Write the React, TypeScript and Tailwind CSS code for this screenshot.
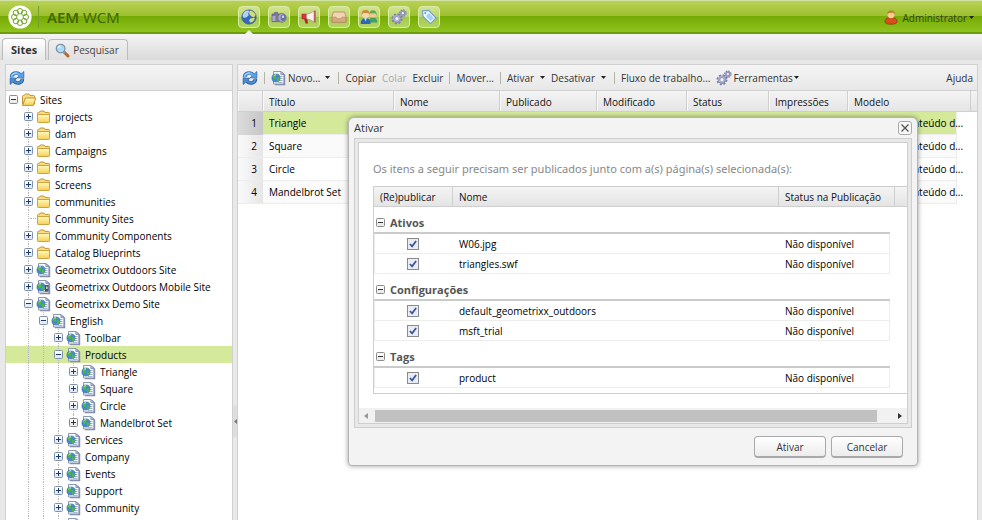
import React from "react";

type Kind = "open" | "folder" | "page" | "mobile";
type Node = { label: string; depth: number; kind: Kind; state: "plus" | "minus" | "none"; last?: boolean; selected?: boolean };

const nodes: Node[] = [
  { label: "Sites", depth: 0, kind: "open", state: "minus" },
  { label: "projects", depth: 1, kind: "folder", state: "plus" },
  { label: "dam", depth: 1, kind: "folder", state: "plus" },
  { label: "Campaigns", depth: 1, kind: "folder", state: "plus" },
  { label: "forms", depth: 1, kind: "folder", state: "plus" },
  { label: "Screens", depth: 1, kind: "folder", state: "plus" },
  { label: "communities", depth: 1, kind: "folder", state: "plus" },
  { label: "Community Sites", depth: 1, kind: "folder", state: "none" },
  { label: "Community Components", depth: 1, kind: "folder", state: "plus" },
  { label: "Catalog Blueprints", depth: 1, kind: "folder", state: "plus" },
  { label: "Geometrixx Outdoors Site", depth: 1, kind: "page", state: "plus" },
  { label: "Geometrixx Outdoors Mobile Site", depth: 1, kind: "mobile", state: "plus" },
  { label: "Geometrixx Demo Site", depth: 1, kind: "page", state: "minus" },
  { label: "English", depth: 2, kind: "page", state: "minus" },
  { label: "Toolbar", depth: 3, kind: "page", state: "plus" },
  { label: "Products", depth: 3, kind: "page", state: "minus", selected: true },
  { label: "Triangle", depth: 4, kind: "page", state: "plus" },
  { label: "Square", depth: 4, kind: "page", state: "plus" },
  { label: "Circle", depth: 4, kind: "page", state: "plus" },
  { label: "Mandelbrot Set", depth: 4, kind: "page", state: "plus", last: true },
  { label: "Services", depth: 3, kind: "page", state: "plus" },
  { label: "Company", depth: 3, kind: "page", state: "plus" },
  { label: "Events", depth: 3, kind: "page", state: "plus" },
  { label: "Support", depth: 3, kind: "page", state: "plus" },
  { label: "Community", depth: 3, kind: "page", state: "plus" },
  { label: "", depth: 3, kind: "page", state: "none" },
];

const FolderIcon = ({ open = false }: { open?: boolean }) => (
  <svg width="16" height="16" viewBox="0 0 16 16" className="shrink-0">
    <defs>
      <linearGradient id="fold" x1="0" y1="0" x2="0" y2="1">
        <stop offset="0" stopColor="#fffac4" />
        <stop offset="1" stopColor="#f6cf52" />
      </linearGradient>
    </defs>
    <path d="M1.5 12V4.4q0-1 1-1h.8l1-1.4h3.6l1 1.4h3.6q1 0 1 1V12z" fill="#f8de80" stroke="#bf9234" />
    {open ? (
      <path d="M1.6 13.4 4.4 6h10.4l-2.4 7.4z" fill="url(#fold)" stroke="#bf9234" />
    ) : (
      <path d="M1.5 5.5h12v7.2q0 .8-.8.8H2.3q-.8 0-.8-.8z" fill="url(#fold)" stroke="#cfa240" />
    )}
  </svg>
);

const PageIcon = ({ mobile = false }: { mobile?: boolean }) => (
  <svg width="16" height="16" viewBox="0 0 16 16" className="shrink-0">
    <path d="M4 2.5h8L14.2 5v10.3H4z" fill="#7c89a6" />
    <path d="M2.5 1.5h7.4l3 3v9.5H2.5z" fill="#f9fbfe" stroke="#8b98b4" />
    <path d="M9.9 1.5v3h3z" fill="#c6d2e8" stroke="#7583a3" strokeWidth=".8" />
    <path d="M8.6 6.5h3M8.6 8.5h3M8.6 10.5h3M7 12.4h4.6" stroke="#a2aec6" />
    <circle cx="5" cy="8" r="4.1" fill="#4488d6" stroke="#2f5f9c" strokeWidth=".5" />
    <path d="M1.4 7Q2.4 4.4 5 4l1 1.2-1.2 1 .6 1.4L4 9.2 2.6 8.6zM6.2 7.6l2.6-.2q0 2.6-2 4L5.6 10z" fill="#4fb83e" />
    <path d="M2.6 6q1-1.4 2.4-1.3" stroke="#d3f5ee" fill="none" strokeWidth=".9" />
    {mobile && <path d="M9 6h3.6v6.6H9z" fill="#434e68" />}
    {mobile && <path d="M10.2 7.5h1.3v2.6h-1.3z" fill="#e6ecf6" />}
  </svg>
);

const Toggle = ({ plus, gray = false }: { plus: boolean; gray?: boolean }) => (
  <svg width="9" height="9" viewBox="0 0 9 9" className="block">
    <rect x=".5" y=".5" width="8" height="8" rx="1" fill={gray ? "#ededed" : "#e3ebf6"} stroke={gray ? "#8a8a8a" : "#7f90ab"} />
    <path d="M1 1h7v3H1z" fill="#fff" opacity=".7" />
    <path d={plus ? "M2 4.5h5M4.5 2v5" : "M2 4.5h5"} stroke={gray ? "#333" : "#1e3a66"} />
  </svg>
);

const Refresh = () => (
  <svg width="16" height="16" viewBox="0 0 16 16" className="shrink-0">
    <path d="M2.6 7.4C2.4 3.4 7.6 1.4 11 4.6" fill="none" stroke="#2c68b2" strokeWidth="3.6" />
    <path d="M14.8 1.6v6.2H8.2z" fill="#5fa2e6" stroke="#2c68b2" strokeWidth=".8" />
    <path d="M2.6 7C2.6 3.6 7.4 1.6 11.2 5" fill="none" stroke="#6fb0ef" strokeWidth="2.2" />
    <path d="M13.4 8.6c.2 4-5 6-8.4 2.8" fill="none" stroke="#2459a0" strokeWidth="3.6" />
    <path d="M1.2 14.4V8.2h6.6z" fill="#4a8ed8" stroke="#2459a0" strokeWidth=".8" />
    <path d="M13.4 9c0 3.4-4.8 5.4-8.6 2" fill="none" stroke="#4a8ed8" strokeWidth="2.2" />
    <path d="M2.6 5.2Q4.4 2.6 7.6 3" stroke="#cfe6fc" fill="none" strokeWidth=".9" />
  </svg>
);

const Gears = () => (
  <svg width="16" height="16" viewBox="0 0 16 16" className="shrink-0">
    <circle cx="6" cy="9.8" r="4.6" fill="none" stroke="#7a7fa4" strokeWidth="1.8" strokeDasharray="2 1.61" />
    <circle cx="6" cy="9.8" r="3" fill="#f2f3fb" stroke="#8e93b8" strokeWidth="2.6" />
    <circle cx="5.6" cy="9.4" r="2.8" fill="none" stroke="#b9bcd8" strokeWidth="1" />
    <circle cx="11.8" cy="4.2" r="3.1" fill="none" stroke="#7a7fa4" strokeWidth="1.4" strokeDasharray="1.5 .93" />
    <circle cx="11.8" cy="4.2" r="2" fill="#f4f5fc" stroke="#9296bb" strokeWidth="1.8" />
  </svg>
);

const Globe = () => (
  <svg width="16" height="16" viewBox="0 0 16 16">
    <circle cx="8" cy="8" r="7.1" fill="#3169bd" stroke="#37588c" strokeWidth=".8" />
    <path d="M1.6 7Q2 2 7.4 1.3L8.4 3 7 4.6l.8 1.6-2.6 2.2L2.4 8.8z" fill="#b4d1f1" />
    <path d="M8.8 1.4q4.4.6 5.8 4.6L13 8.4 10 7.2 8 4.6zM9.4 9.4l4.4-.6q-.2 3.4-4 5L8 11.8z" fill="#d2dc78" />
  </svg>
);
const Camera = () => (
  <svg width="16" height="16" viewBox="0 0 16 16">
    <path d="M1 5h2.6V3.4h3V5H10v7.6H1z" fill="#7d7a98" stroke="#5f5c7c" strokeWidth=".7" />
    <path d="M1.4 7h3v5h-3z" fill="#aeaac6" />
    <ellipse cx="11" cy="8.8" rx="4.2" ry="4.4" fill="#a9a6c2" stroke="#6a6784" strokeWidth=".7" />
    <ellipse cx="12.2" cy="8.8" rx="2.6" ry="3.2" fill="#6a70a4" />
    <ellipse cx="12" cy="7.8" rx="1.1" ry="1.2" fill="#d6dbf6" />
  </svg>
);
const Megaphone = () => (
  <svg width="16" height="16" viewBox="0 0 16 16">
    <path d="M3 9.4h3.2l.8 5H4.6z" fill="#b3222b" />
    <path d="M1 5.2h4.6v4.6H1z" fill="#e0353c" stroke="#a31d26" strokeWidth=".7" />
    <path d="M5.6 5.2Q9 5 13 2v11Q9 10 5.6 9.8z" fill="#fbf1f0" stroke="#b98a8a" strokeWidth=".7" />
    <path d="M13 1.6h1.8v11.8H13z" fill="#b96468" />
  </svg>
);
const Inbox = () => (
  <svg width="16" height="16" viewBox="0 0 16 16">
    <path d="M2.4 3h11.2L15 8v5.4H1V8z" fill="#f0d5b2" stroke="#b0895f" strokeWidth=".8" />
    <path d="M1.4 8.2H5l1 1.6h4l1-1.6h3.6v5H1.4z" fill="#d8ab7c" stroke="#b0895f" strokeWidth=".7" />
  </svg>
);
const People = () => (
  <svg width="18" height="16" viewBox="0 0 18 16">
    <path d="M9 13.6q0-5.2 4-5.2t4.4 5.2z" fill="#3fa06a" />
    <circle cx="13" cy="5.2" r="3.2" fill="#f3c793" />
    <path d="M9.6 4.6Q9.8 1 13.2 1.2q3.8.2 3.4 5.6l-1.4-2.6z" fill="#5bab4d" />
    <path d="M.6 15q0-6 5-6t5 6z" fill="#2e66b8" />
    <path d="M4.3 9.2h2.6l-1.3 3z" fill="#fff" />
    <circle cx="5.6" cy="5.4" r="3.6" fill="#fad5a4" />
    <path d="M1.6 6Q1.2 1 5.6 1t4 5L8 4 3.4 4z" fill="#c98a3c" />
  </svg>
);
const Tag = () => (
  <svg width="16" height="16" viewBox="0 0 16 16">
    <path d="M1.6 1.8 7.6 1.4 15 9l-5.4 5.6L2 7.4z" fill="#f1f8ff" stroke="#6b9fd4" strokeWidth="1.1" />
    <path d="M4.8 7 8 4l4.8 5-3.2 3.2z" fill="#a8d0f5" />
    <circle cx="4.3" cy="4.1" r="1.1" fill="#6b9fd4" />
  </svg>
);

const Logo = () => (
  <svg width="24" height="24" viewBox="0 0 24 24" className="shrink-0">
    <circle cx="12" cy="12" r="11.6" fill="#fff" />
    <g fill="none" stroke="#73a62a">
      <circle cx="17.8" cy="12" r="2.7" />
      <circle cx="16.1" cy="16.1" r="2.7" />
      <circle cx="12" cy="17.8" r="2.7" />
      <circle cx="7.9" cy="16.1" r="2.7" />
      <circle cx="6.2" cy="12" r="2.7" />
      <circle cx="7.9" cy="7.9" r="2.7" />
      <circle cx="12" cy="6.2" r="2.7" />
      <circle cx="16.1" cy="7.9" r="2.7" />
    </g>
  </svg>
);

const Caret = () => (
  <svg width="5" height="3" viewBox="0 0 5 3" className="shrink-0">
    <path d="M0 0h5L2.5 3z" fill="#222" />
  </svg>
);

const Sep = () => <span className="h-3 w-px shrink-0 bg-[#b5b5a5]" />;

const apps: [string, React.ReactNode][] = [
  ["Sites", <Globe />],
  ["Ativos digitais", <Camera />],
  ["Campanhas", <Megaphone />],
  ["Caixa de entrada", <Inbox />],
  ["Usuários", <People />],
  ["Ferramentas", <Gears />],
  ["Tags", <Tag />],
];

const rows = ["Triangle", "Square", "Circle", "Mandelbrot Set"];

const groups = [
  { name: "Ativos", items: ["W06.jpg", "triangles.swf"] },
  { name: "Configurações", items: ["default_geometrixx_outdoors", "msft_trial"] },
  { name: "Tags", items: ["product"] },
];

const Header = () => (
  <header className="flex h-[34px] shrink-0 items-center border-t border-b-2 border-t-[#d3e3a6] border-b-[#6d9c12] bg-[linear-gradient(#b9d154_0%,#9dc02f_47%,#76ab06_50%,#8fc31d_100%)] px-2">
    <div className="flex w-[230px] items-center">
      <Logo />
      <span className="mx-[6px] h-[22px] w-px bg-[#7b9f2d]" />
      <h1 className="ml-0.5 text-[15px] leading-5 text-[#406200]">
        <b className="font-semibold">AEM</b> WCM
      </h1>
    </div>
    <nav className="flex gap-2">
      {apps.map(([name, icon], i) => (
        <button
          key={name}
          aria-label={name}
          className="relative flex h-[22px] w-[22px] items-center justify-center rounded border border-[#dcebac] bg-[linear-gradient(#d3e391,#bcd76c_48%,#a3ca49_52%,#b2d565)]"
        >
          {icon}
          {i === 0 && (
            <svg width="12" height="6" viewBox="0 0 12 6" className="absolute top-[23px] left-1">
              <path d="M0 6 6 0l6 6z" fill="#f3f3f3" />
            </svg>
          )}
        </button>
      ))}
    </nav>
    <button className="ml-auto flex items-center gap-0.5 pt-0.5 text-[#333f1c]">
      <svg width="14" height="16" viewBox="0 0 14 16" className="mr-0.5">
        <path d="M1 11.6q0-4 6-4t6 4q0 2.6-6 2.6t-6-2.6z" fill="#d9501f" stroke="#8d2a0c" strokeWidth=".7" />
        <circle cx="7" cy="4.6" r="3.6" fill="#f7cd92" />
        <path d="M3.2 4.8Q3 .6 7 .6t3.8 4.2L9 2.8l-4 .2z" fill="#c47a32" />
      </svg>
      Administrator
      <Caret />
    </button>
  </header>
);

const Tree = () => (
  <section className="w-[228px] shrink-0 overflow-hidden border border-b-0 border-[#d0d0d0] bg-white">
    <div className="flex h-[26px] items-center border-b border-[#d0d0d0] bg-[linear-gradient(#f4f4f4,#e8e8e8)] px-[3px]">
      <button aria-label="Atualizar árvore">
        <Refresh />
      </button>
    </div>
    <ul>
      {nodes.map((n, i) => (
        <li key={i} className={n.selected ? "flex h-[17px] items-center bg-[#d4ea9a]" : "flex h-[17px] items-center"}>
          {Array.from({ length: n.depth }, (_, d) => (
            <span key={d} className="flex h-full w-[15px] justify-center">
              {d > 0 && <span className="w-px border-l border-dotted border-[#b5b5b5]" />}
            </span>
          ))}
          <span className="grid h-full w-[15px] shrink-0 place-items-center">
            {n.depth > 0 && (
              <span
                className={
                  n.last
                    ? "col-start-1 row-start-1 h-2 w-px self-start border-l border-dotted border-[#b5b5b5]"
                    : "col-start-1 row-start-1 h-full w-px border-l border-dotted border-[#b5b5b5]"
                }
              />
            )}
            {n.state === "none" ? (
              <span className="col-start-1 row-start-1 ml-2 w-[6px] border-t border-dotted border-[#b5b5b5]" />
            ) : (
              <button aria-label={`Alternar ${n.label}`} className="col-start-1 row-start-1">
                <Toggle plus={n.state === "plus"} gray={n.depth === 0 || n.last} />
              </button>
            )}
          </span>
          {n.kind === "open" || n.kind === "folder" ? <FolderIcon open={n.kind === "open"} /> : <PageIcon mobile={n.kind === "mobile"} />}
          <span className="ml-[3px] whitespace-nowrap">{n.label}</span>
        </li>
      ))}
    </ul>
  </section>
);

const Toolbar = () => (
  <div className="flex h-[26px] items-center border-b border-[#d0d0d0] bg-[linear-gradient(#f4f4f4,#e8e8e8)] px-1 whitespace-nowrap text-[#333]">
    <div className="flex items-center gap-[6px]">
      <button aria-label="Atualizar lista">
        <Refresh />
      </button>
      <Sep />
      <button className="flex items-center gap-px">
        <PageIcon />
        Novo...
        <span className="ml-1">
          <Caret />
        </span>
      </button>
      <span className="-ml-1" />
      <Sep />
      <button>Copiar</button>
      <button disabled className="text-[#aaa]">
        Colar
      </button>
      <button>Excluir</button>
      <Sep />
      <button>Mover...</button>
      <Sep />
      <button className="flex items-center gap-[6px]">
        Ativar
        <Caret />
      </button>
      <button className="flex items-center gap-[6px]">
        Desativar
        <Caret />
      </button>
      <span className="-ml-1" />
      <Sep />
      <button>Fluxo de trabalho...</button>
      <button className="flex items-center gap-px">
        <Gears />
        Ferramentas
        <Caret />
      </button>
    </div>
    <button className="ml-auto">Ajuda</button>
  </div>
);

const headCell = "h-[21px] border-r border-[#cfcfcf] border-b border-b-[#cfcfcf] pt-0.5 pl-[6px] text-left font-medium shadow-[inset_1px_0_0_#f8f8f8]";

const Grid = () => (
  <table className="w-full table-fixed border-separate border-spacing-0 whitespace-nowrap">
    <colgroup>
      <col className="w-[25px]" />
      <col className="w-[131px]" />
      <col className="w-[106px]" />
      <col className="w-[97px]" />
      <col className="w-[90px]" />
      <col className="w-[82px]" />
      <col className="w-[79px]" />
      <col />
      <col className="w-[14px]" />
      <col className="w-[6px]" />
    </colgroup>
    <thead className="bg-[linear-gradient(#f4f4f4,#e4e4e4)] text-[#111]">
      <tr>
        <th className={headCell} />
        <th className={headCell}>Título</th>
        <th className={headCell}>Nome</th>
        <th className={headCell}>Publicado</th>
        <th className={headCell}>Modificado</th>
        <th className={headCell}>Status</th>
        <th className={headCell}>Impressões</th>
        <th className={headCell} colSpan={2}>
          Modelo
        </th>
        <th className="border-b border-[#cfcfcf]" />
      </tr>
    </thead>
    <tbody>
      {rows.map((title, i) => (
        <tr key={title} className={i === 0 ? "bg-[#d4ea9a]" : i % 2 ? "bg-[#fafafa]" : "bg-white"}>
          <td className={i === 0 ? "h-[23px] bg-[linear-gradient(90deg,#dcdcdc,#c6c6c6)] pr-[6px] pb-0.5 text-right" : "h-[23px] border-b border-[#ededed] bg-[linear-gradient(90deg,#fafafa,#e6e6e6)] pr-[6px] pb-px text-right"}>
            {i + 1}
          </td>
          <td className="border-b border-[#ededed] pb-px pl-[6px]">{title}</td>
          <td className="border-b border-[#ededed]" colSpan={5} />
          <td className="border-r border-b border-[#ededed] pb-px pl-[6px]">Página de conteúdo d...</td>
          <td className="bg-white" colSpan={2} />
        </tr>
      ))}
    </tbody>
  </table>
);

const dlgHead = "h-[20px] border-r border-b border-[#cfcfcf] bg-[linear-gradient(#f4f4f4,#e4e4e4)] pl-[6px] text-left font-medium";
const actionButton =
  "h-[22px] w-[72px] rounded-[4px] border border-b-2 border-[#a9a9a9] bg-[linear-gradient(#fff,#ececec)] text-[#333]";

const Dialog = () => (
  <div
    role="dialog"
    aria-labelledby="dlg-title"
    className="absolute top-[117px] left-[348px] w-[570px] rounded-t-md rounded-b-sm border border-[#b4b4b4] bg-[#f3f3f3] px-[5px] pb-[7px] shadow-[0_0_5px_rgba(0,0,0,0.4)]"
  >
    <div className="flex h-5 items-center justify-between">
      <h2 id="dlg-title" className="text-[11px] text-[#333]">
        Ativar
      </h2>
      <button aria-label="Fechar" className="grid h-[14px] w-[14px] place-items-center rounded-[3px] border border-[#aaa] bg-[#f8f8f8]">
        <svg width="8" height="8" viewBox="0 0 8 8">
          <path d="M.5.5l7 7M7.5.5l-7 7" stroke="#555" strokeWidth="1.3" />
        </svg>
      </button>
    </div>
    <div className="border border-[#cfcfcf] bg-[#e8e8e8] p-[3px]">
      <div className="border border-[#cfcfcf] bg-white">
        <div className="pt-[16px] pl-[14px]">
          <p className="h-[27px] font-['Noto_Sans',sans-serif] text-[11px] leading-5 text-[#888]">
            Os itens a seguir precisam ser publicados junto com a(s) página(s) selecionada(s):
          </p>
          <div className="border border-r-0 border-[#cfcfcf] pb-[5px]">
            <table className="w-full table-fixed border-separate border-spacing-0 whitespace-nowrap">
              <colgroup>
                <col className="w-[79px]" />
                <col className="w-[326px]" />
                <col className="w-[111px]" />
                <col className="w-[5px]" />
                <col />
              </colgroup>
              <thead className="text-[#111]">
                <tr>
                  <th className={dlgHead}>(Re)publicar</th>
                  <th className={dlgHead}>Nome</th>
                  <th className={dlgHead} colSpan={2}>
                    Status na Publicação
                  </th>
                  <th className="border-b border-[#cfcfcf] bg-[linear-gradient(#f4f4f4,#e4e4e4)]" />
                </tr>
              </thead>
              {groups.map((g) => (
                <tbody key={g.name}>
                  <tr>
                    <th colSpan={3} className="h-[27px] border-b-2 border-[#cbcbcb] pt-1.5 pl-[2px] text-left font-bold text-[#555]">
                      <button className="flex items-center gap-[5px] text-[11px]">
                        <Toggle plus={false} gray />
                        {g.name}
                      </button>
                    </th>
                  </tr>
                  {g.items.map((item) => (
                    <tr key={item}>
                      <td className="h-5 border-b border-l border-[#ededed]">
                        <span className="grid place-items-center pr-0.5">
                          <input
                            type="checkbox"
                            defaultChecked
                            aria-label={item}
                            className="peer col-start-1 row-start-1 h-[12px] w-[12px] appearance-none border border-[#8a8a8a] bg-[#e9edf3]"
                          />
                          <svg width="8" height="8" viewBox="0 0 9 9" className="pointer-events-none invisible col-start-1 row-start-1 peer-checked:visible">
                            <path d="M1 4.5 3.5 7.2 8 1.2" fill="none" stroke="#3b54a0" strokeWidth="2" />
                          </svg>
                        </span>
                      </td>
                      <td className="border-b border-[#ededed] pl-[6px]">{item}</td>
                      <td className="border-r border-b border-[#ededed] pl-[6px]">Não disponível</td>
                    </tr>
                  ))}
                </tbody>
              ))}
            </table>
          </div>
        </div>
        <div className="mt-[14px] flex h-[15px] items-center bg-[#f1f1f1] px-[5px]">
          <svg width="4" height="6" viewBox="0 0 4 6">
            <path d="M4 0v6L0 3z" fill="#999" />
          </svg>
          <div className="mr-[21px] ml-[7px] h-3 flex-1 bg-[#c1c1c1]" />
          <svg width="4" height="6" viewBox="0 0 4 6">
            <path d="M0 0v6l4-3z" fill="#333" />
          </svg>
        </div>
      </div>
    </div>
    <div className="mt-[8px] flex justify-end gap-[5px] pr-[9px]">
      <button className={actionButton}>Ativar</button>
      <button className={actionButton}>Cancelar</button>
    </div>
  </div>
);

export default function App() {
  return (
    <div className="relative flex h-screen flex-col overflow-hidden bg-[#e8e8e8] font-['Open_Sans','Noto_Sans',sans-serif] text-[10px] leading-4 text-[#000]">
      <Header />
      <div role="tablist" className="flex h-[26px] shrink-0 items-end gap-0.5 bg-[linear-gradient(#f4f4f4,#dadada)] px-0.5">
        <button role="tab" aria-selected="true" className="h-[22px] rounded-t border border-b-0 border-[#bcbcbc] bg-[linear-gradient(#fff,#e8e8e8)] px-[8px] text-[11px] font-bold text-[#333]">
          Sites
        </button>
        <button role="tab" aria-selected="false" className="flex h-[21px] items-center gap-[3px] rounded-t border border-b-0 border-[#bcbcbc] bg-[linear-gradient(#efefef,#e0e0e0)] pr-[8px] pl-[6px] text-[#444]">
          <svg width="15" height="15" viewBox="0 0 15 15">
            <path d="M8.5 8.5 13 13" stroke="#b9652a" strokeWidth="3" strokeLinecap="round" />
            <path d="M8.5 8.5 10 10" stroke="#8c9aa8" strokeWidth="2" />
            <circle cx="5.6" cy="5.6" r="4.3" fill="#a9dcf8" stroke="#7d92a6" strokeWidth="1.3" />
            <path d="M3 5q.6-2 2.6-2.2" stroke="#fff" fill="none" strokeWidth="1.3" />
          </svg>
          Pesquisar
        </button>
      </div>
      <main className="flex min-h-0 flex-1 pt-[4px] pr-[4px] pl-[5px]">
        <Tree />
        <div className="flex w-1 shrink-0 flex-col">
          <button aria-label="Recolher painel" className="mt-[341px] grid h-8 place-items-center rounded-sm bg-[#dedede]">
            <svg width="3" height="5" viewBox="0 0 3 5">
              <path d="M3 0v5L0 2.5z" fill="#777" />
            </svg>
          </button>
        </div>
        <section className="min-w-0 flex-1 border border-b-0 border-[#d0d0d0] bg-white">
          <Toolbar />
          <Grid />
        </section>
      </main>
      <Dialog />
    </div>
  );
}
